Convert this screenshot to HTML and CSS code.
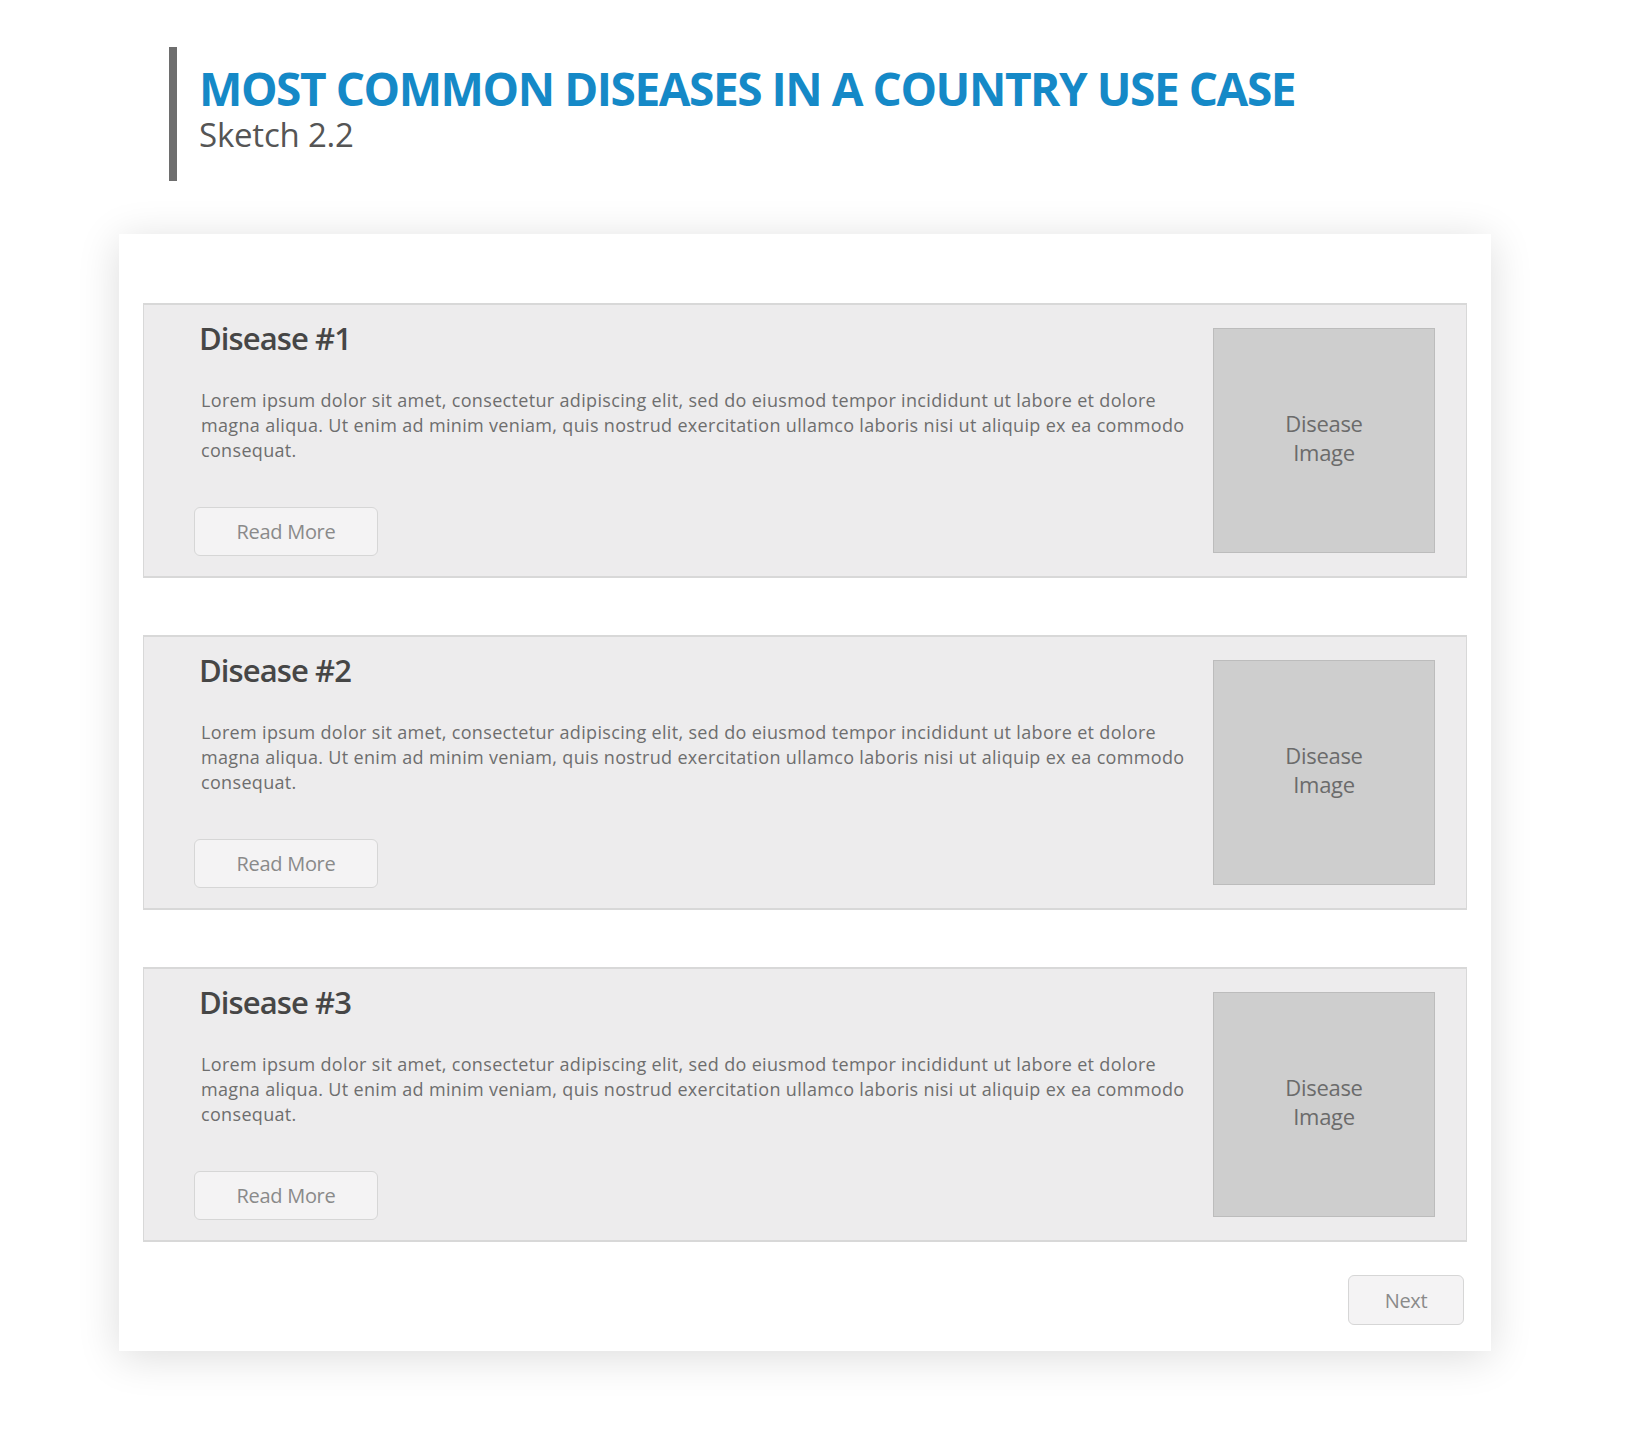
FILE: index.html
```html
<!DOCTYPE html>
<html lang="en">
<head>
<meta charset="utf-8">
<title>Most Common Diseases in a Country Use Case</title>
<link rel="stylesheet" href="styles.css">
</head>
<body>
<header class="page-header">
  <h1 class="page-title">MOST COMMON DISEASES IN A COUNTRY USE CASE</h1>
  <div class="page-subtitle">Sketch 2.2</div>
</header>

<main class="panel">
  <article class="card">
    <div class="card-body">
      <h2 class="card-title">Disease #1</h2>
      <p class="card-text">Lorem ipsum dolor sit amet, consectetur adipiscing elit, sed do eiusmod tempor incididunt ut labore et dolore magna aliqua. Ut enim ad minim veniam, quis nostrud exercitation ullamco laboris nisi ut aliquip ex ea commodo consequat.</p>
      <button class="btn btn-read">Read More</button>
    </div>
    <div class="card-image">Disease<br>Image</div>
  </article>

  <article class="card">
    <div class="card-body">
      <h2 class="card-title">Disease #2</h2>
      <p class="card-text">Lorem ipsum dolor sit amet, consectetur adipiscing elit, sed do eiusmod tempor incididunt ut labore et dolore magna aliqua. Ut enim ad minim veniam, quis nostrud exercitation ullamco laboris nisi ut aliquip ex ea commodo consequat.</p>
      <button class="btn btn-read">Read More</button>
    </div>
    <div class="card-image">Disease<br>Image</div>
  </article>

  <article class="card">
    <div class="card-body">
      <h2 class="card-title">Disease #3</h2>
      <p class="card-text">Lorem ipsum dolor sit amet, consectetur adipiscing elit, sed do eiusmod tempor incididunt ut labore et dolore magna aliqua. Ut enim ad minim veniam, quis nostrud exercitation ullamco laboris nisi ut aliquip ex ea commodo consequat.</p>
      <button class="btn btn-read">Read More</button>
    </div>
    <div class="card-image">Disease<br>Image</div>
  </article>

  <div class="panel-footer">
    <button class="btn btn-next">Next</button>
  </div>
</main>
</body>
</html>
```
FILE: styles.css
```css
* {
  box-sizing: border-box;
}

html, body {
  margin: 0;
  padding: 0;
  background: #ffffff;
}

body {
  font-family: "Open Sans", "Noto Sans", sans-serif;
  width: 1630px;
  height: 1439px;
  overflow: hidden;
}

.page-header {
  margin: 47px 0 0 169px;
  border-left: 8px solid #6e6e6e;
  padding: 16px 0 26px 22px;
}

.page-title {
  margin: 0;
  font-size: 46px;
  line-height: 50px;
  font-weight: 700;
  color: #1589c7;
  letter-spacing: -1.45px;
  white-space: nowrap;
}

.page-subtitle {
  margin-top: 2px;
  font-size: 33px;
  line-height: 40px;
  color: #555555;
  letter-spacing: -0.2px;
}

.panel {
  margin: 53px 0 0 119px;
  width: 1372px;
  background: #ffffff;
  box-shadow: 0 6px 40px rgba(0, 0, 0, 0.14);
  padding: 69px 24px 26px 24px;
  display: flex;
  flex-direction: column;
  gap: 57px;
}

.card {
  display: flex;
  height: 275px;
  background: #edeced;
  border: 1px solid #d8d8d8;
  border-top-width: 2px;
  border-bottom-width: 2px;
  padding-right: 31px;
}

.card-body {
  flex: 1;
  padding: 15px 0 0 50px;
  display: flex;
  flex-direction: column;
  align-items: flex-start;
}

.card-title {
  margin: 0 0 0 5px;
  font-size: 31px;
  line-height: 36px;
  font-weight: 600;
  color: #464646;
  letter-spacing: -0.9px;
}

.card-text {
  margin: 32px 0 0 7px;
  max-width: 1000px;
  font-size: 18px;
  line-height: 25px;
  color: #6e6e6e;
  letter-spacing: 0.33px;
}

.btn {
  font-family: "Open Sans", "Noto Sans", sans-serif;
  background: #f4f3f4;
  border: 1px solid #d6d6d6;
  border-radius: 6px;
  color: #8a8a8a;
  font-size: 20px;
  letter-spacing: -0.3px;
  padding: 0;
  display: flex;
  align-items: center;
  justify-content: center;
}

.btn-read {
  margin-top: 44px;
  width: 184px;
  height: 49px;
}

.card-image {
  margin-top: 23px;
  width: 222px;
  height: 225px;
  background: #cecece;
  border: 1px solid #bcbcbc;
  padding-bottom: 5px;
  display: flex;
  align-items: center;
  justify-content: center;
  text-align: center;
  font-size: 22px;
  line-height: 29px;
  color: #6b6b6b;
  letter-spacing: -0.3px;
}

.panel-footer {
  display: flex;
  justify-content: flex-end;
  margin-top: -24px;
  padding-right: 3px;
}

.btn-next {
  width: 116px;
  height: 50px;
}
```
